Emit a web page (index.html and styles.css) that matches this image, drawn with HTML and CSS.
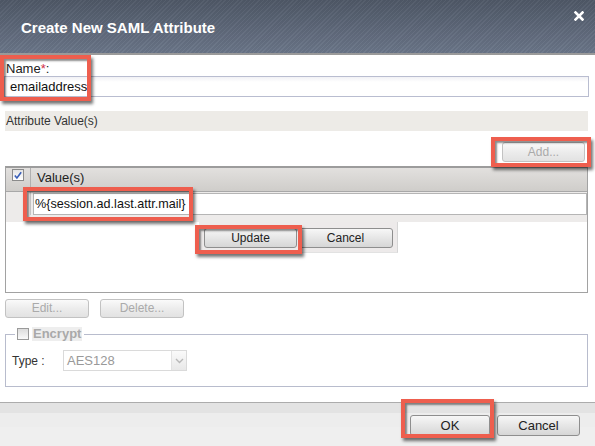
FILE: index.html
```html
<!DOCTYPE html>
<html>
<head>
<meta charset="utf-8">
<title>Create New SAML Attribute</title>
<link rel="stylesheet" href="styles.css">
</head>
<body>
<div class="dialog">
  <header class="titlebar">
    <h1 class="title">Create New SAML Attribute</h1>
    <span class="close" aria-label="Close">
      <svg width="10" height="10" viewBox="0 0 10 10"><path d="M1.5 1.5 L8.5 8.5 M8.5 1.5 L1.5 8.5" stroke="#fff" stroke-width="2.6" stroke-linecap="square"/></svg>
    </span>
  </header>

  <div class="content">
    <div class="field-label">Name<span class="req">*</span>:</div>
    <div class="text-input">emailaddress</div>

    <div class="section-band">Attribute Value(s)</div>

    <div class="add-row"><button class="btn btn-disabled btn-add">Add...</button></div>

    <div class="grid">
      <div class="grid-head">
        <div class="cb-col">
          <span class="checkbox">
            <svg width="11" height="11" viewBox="0 0 11 11"><path d="M2 5.5 L4.3 8.3 L9 2" fill="none" stroke="#3a5fb8" stroke-width="1.8"/></svg>
          </span>
        </div>
        <div class="head-col">Value(s)</div>
      </div>
      <div class="edit-row">
        <div class="cb-col-edit"></div>
        <div class="edit-input">%{session.ad.last.attr.mail}</div>
      </div>
      <div class="grid-body">
        <div class="editor-actions">
          <button class="btn btn-update">Update</button>
          <button class="btn btn-ecancel">Cancel</button>
        </div>
      </div>
    </div>

    <div class="row-actions">
      <button class="btn btn-disabled btn-small">Edit...</button>
      <button class="btn btn-disabled btn-small">Delete...</button>
    </div>

    <fieldset class="encrypt">
      <legend class="encrypt-legend"><span class="checkbox checkbox-off"></span><span class="legend-text">Encrypt</span></legend>
      <div class="type-row">
        <span class="type-label">Type :</span>
        <div class="select">
          <span class="select-value">AES128</span>
          <span class="select-arrow">
            <svg width="9" height="6" viewBox="0 0 9 6"><path d="M1 1 L4.5 4.5 L8 1" fill="none" stroke="#b8b8b8" stroke-width="1.4"/></svg>
          </span>
        </div>
      </div>
    </fieldset>
  </div>

  <footer class="footer">
    <button class="btn btn-ok">OK</button>
    <button class="btn btn-cancel">Cancel</button>
  </footer>

  <div class="callout callout-name"></div>
  <div class="callout callout-add"></div>
  <div class="callout callout-value"></div>
  <div class="callout callout-update"></div>
  <div class="callout callout-ok"></div>
</div>
</body>
</html>
```

FILE: styles.css
```css
* { box-sizing: border-box; }

html, body {
  margin: 0;
  padding: 0;
  background: #fff;
}

body {
  font-family: "Liberation Sans", Arial, sans-serif;
  font-size: 12px;
  color: #222;
}

.dialog {
  position: relative;
  width: 595px;
  height: 446px;
  overflow: hidden;
  background: #fff;
  display: flex;
  flex-direction: column;
}

/* Title bar */
.titlebar {
  height: 55px;
  flex: none;
  display: flex;
  align-items: flex-start;
  justify-content: space-between;
  border-bottom: 2px solid #9a9a9a;
  background:
    repeating-linear-gradient(135deg, rgba(255,255,255,0.035) 0 1px, rgba(0,0,0,0.035) 1px 3px),
    linear-gradient(#4f5867, #6b7689);
}

.title {
  margin: 19px 0 0 21px;
  font-size: 15px;
  font-weight: bold;
  color: #fff;
  line-height: 17px;
}

.close {
  margin: 11px 11px 0 0;
  width: 10px;
  height: 10px;
  display: flex;
}

/* Content */
.content {
  padding: 6px 6px 0 4px;
  display: flex;
  flex-direction: column;
}

.field-label {
  font-size: 13px;
  line-height: 15px;
  padding-left: 2px;
  color: #222;
}

.req { color: #d0304a; }

.text-input {
  height: 21px;
  border: 1px solid #b9bdd0;
  background: linear-gradient(#f1f1f5, #fff 5px);
  font-size: 13px;
  line-height: 19px;
  padding-left: 5px;
  color: #111;
}

.section-band {
  margin: 14px 1px 0 1px;
  height: 20px;
  background: #edebe7;
  font-size: 12px;
  line-height: 20px;
  padding-left: 1px;
  color: #333;
}

.add-row {
  margin-top: 11px;
  display: flex;
  justify-content: flex-end;
  padding-right: 4px;
}

/* Buttons */
.btn {
  font-family: "Liberation Sans", Arial, sans-serif;
  font-size: 12px;
  height: 20px;
  padding: 0;
  border: 1px solid #8e8e8e;
  border-radius: 3px;
  background: linear-gradient(#f7f7f7, #e6e6e6 50%, #d6d6d6);
  color: #222;
  line-height: 18px;
}

.btn-disabled {
  border-color: #c2c2c2;
  color: #aaa;
  background: linear-gradient(#fafafa, #ececec 50%, #e2e2e2);
}

.btn-add { width: 83px; }

/* Grid */
.grid {
  margin: 4px 1px 0 1px;
  height: 127px;
  border: 1px solid #a2a2a2;
  border-top: 2px solid #9c9c9c;
  display: flex;
  flex-direction: column;
}

.grid-head {
  height: 24px;
  flex: none;
  display: flex;
  border-bottom: 1px solid #a8a8a8;
  background: linear-gradient(#e2e0de, #cfcdca);
}

.cb-col {
  width: 25px;
  border-right: 1px solid #b0b0b0;
  display: flex;
  justify-content: center;
  align-items: flex-start;
  padding-top: 1px;
}

.checkbox {
  width: 12px;
  height: 12px;
  border: 1px solid #8b8b8b;
  background: linear-gradient(#e4e4e4, #fff);
  display: flex;
  align-items: center;
  justify-content: center;
}

.head-col {
  padding-left: 6px;
  font-size: 13px;
  line-height: 20px;
  color: #222;
}

.edit-row {
  height: 30px;
  flex: none;
  display: flex;
  align-items: flex-start;
  background: #edebea;
}

.cb-col-edit {
  width: 25px;
  height: 23px;
  border-right: 1px solid #c8c8c8;
}

.edit-input {
  flex: 1;
  margin: 1px 0 0 2px;
  height: 22px;
  border: 1px solid #b5b5b5;
  background: #fff;
  font-size: 12.6px;
  line-height: 20px;
  padding-left: 1px;
  color: #111;
}

.grid-body {
  flex: 1;
  background: #fff;
}

.editor-actions {
  margin-left: 193px;
  width: 199px;
  height: 31px;
  background: #edeaea;
  display: flex;
  gap: 1px;
  padding: 6px 0 0 5px;
  border-right: 1px solid #d6d6d6;
  border-bottom: 1px solid #e2e2e2;
}

.btn-update { width: 93px; }
.btn-ecancel { width: 95px; }

.row-actions {
  margin: 6px 0 0 1px;
  display: flex;
  gap: 11px;
}

.btn-small { width: 84px; height: 19px; line-height: 17px; }

/* Encrypt fieldset */
.encrypt {
  margin: 9px 1px 0 1px;
  padding: 0 0 14px 6px;
  border: 1px solid #b8bccd;
  height: 60px;
}

.encrypt-legend {
  padding: 0 2px;
  margin-left: 3px;
  display: flex;
  align-items: center;
  gap: 3px;
  height: 14px;
}

.checkbox-off {
  background: linear-gradient(#dcdcdc, #fafafa);
  border-color: #9a9a9a;
}

.legend-text {
  font-size: 13px;
  font-weight: bold;
  color: #a9a9a9;
  background: #eeeeee;
  line-height: 14px;
  padding: 0 1px;
}

.type-row {
  margin-top: 9px;
  display: flex;
  align-items: center;
}

.type-label {
  width: 51px;
  font-size: 12px;
  color: #333;
}

.select {
  width: 124px;
  height: 21px;
  border: 1px solid #dadada;
  display: flex;
  background: #fff;
}

.select-value {
  flex: 1;
  font-size: 13px;
  line-height: 19px;
  color: #999;
  padding-left: 3px;
}

.select-arrow {
  width: 15px;
  border-left: 1px solid #e2e2e2;
  background: linear-gradient(#fafafa, #e8e8e8);
  display: flex;
  align-items: center;
  justify-content: center;
}

/* Footer */
.footer {
  margin-top: auto;
  height: 44px;
  flex: none;
  border-top: 1px solid #acacac;
  background: linear-gradient(#e3e3e3 0 10px, #ededed 10px 24px, #efefef 24px);
  display: flex;
  justify-content: flex-end;
  align-items: flex-start;
  gap: 7px;
  padding: 12px 15px 0 0;
}

.btn-ok { width: 80px; height: 21px; font-size: 13px; }
.btn-cancel { width: 83px; height: 21px; font-size: 13px; }

/* Highlight callouts (overlay annotations) */
.callout {
  position: absolute;
  border: 4px solid #ee5e4e;
  box-shadow: 2px 3px 3px rgba(0,0,0,0.55), inset 2px 2px 2px rgba(0,0,0,0.45);
  pointer-events: none;
}

.callout-name   { left: 0;     top: 55px;  width: 91px;  height: 46px; }
.callout-add    { left: 491px; top: 137px; width: 100px; height: 30px; }
.callout-value  { left: 23px;  top: 187px; width: 170px; height: 34px; }
.callout-update { left: 195px; top: 225px; width: 107px; height: 29px; }
.callout-ok     { left: 401px; top: 399px; width: 93px;  height: 39px; }
```
